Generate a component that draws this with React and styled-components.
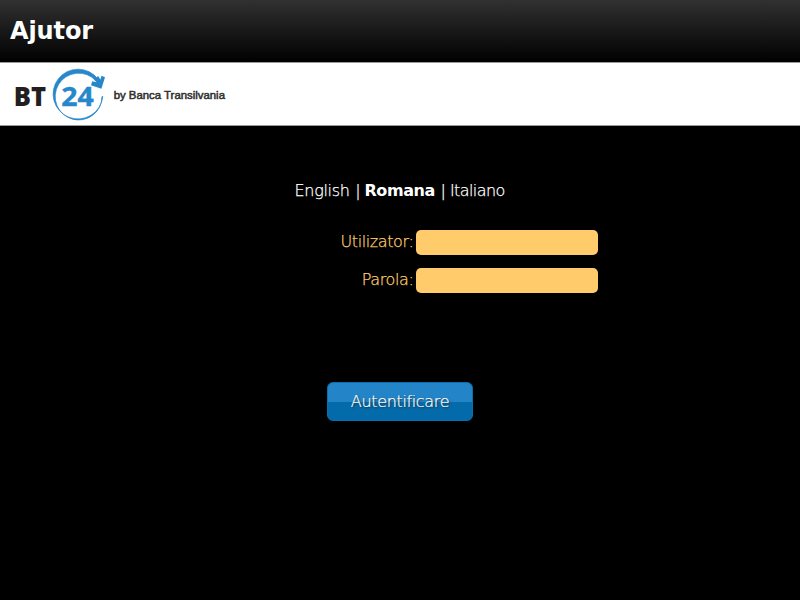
import React from 'react';
import styled, { createGlobalStyle } from 'styled-components';

const GlobalStyle = createGlobalStyle`
  * { box-sizing: border-box; }
  body {
    margin: 0;
    background: #000;
    font-family: "DejaVu Sans", sans-serif;
  }
`;

const Page = styled.div`
  height: 600px;
  overflow: hidden;
  background: #000;
  display: flex;
  flex-direction: column;
  will-change: opacity;
`;

const Header = styled.header`
  height: 62px;
  flex: none;
  display: flex;
  align-items: center;
  padding: 0 10px;
  color: #fff;
  background: linear-gradient(#313131, #000);
`;

const Title = styled.h1`
  margin: 0;
  font-size: 24px;
  line-height: 28px;
  font-weight: bold;
  letter-spacing: -0.1px;
`;

const Brand = styled.div`
  height: 64px;
  flex: none;
  background: #fff;
  border-top: 1px solid #999;
  border-bottom: 1px solid #999;
`;

const Logo = styled.svg`
  display: block;
`;

const Languages = styled.nav`
  display: grid;
  grid-template-columns: 56px 14px 71px 14.5px 56px;
  margin: 55px 0 0 294.5px;
  line-height: 20px;
  font-size: 16px;
  color: #fff;
  white-space: nowrap;
`;

const Language = styled.span`
  font-weight: ${(p) => (p.$active ? 700 : 200)};
  letter-spacing: ${(p) => p.$spacing}px;
  -webkit-text-stroke: ${(p) => (p.$active ? 0 : 0.25)}px #fff;
`;

const Divider = styled.span`
  justify-self: center;
  padding-left: 0.8px;
  font-weight: 200;
  -webkit-text-stroke: 0.25px #fff;
`;

const Form = styled.form`
  display: grid;
  grid-template-columns: 413.4px 182px;
  column-gap: 2.6px;
  row-gap: 13px;
  margin-top: 29px;
`;

const Label = styled.label`
  text-align: right;
  font-size: 16px;
  line-height: 23px;
  font-weight: 200;
  letter-spacing: -0.4px;
  color: #ffcb6b;
  -webkit-text-stroke: 0.25px #ffcb6b;
`;

const Input = styled.input`
  width: 182px;
  height: 25px;
  border: 0;
  border-radius: 5px;
  background: #ffcb6b;
  outline: none;
`;

const Submit = styled.button`
  align-self: center;
  width: 146px;
  height: 39px;
  margin-top: 89px;
  padding: 0;
  border: 1px solid #0a6fb1;
  border-radius: 6px;
  background: linear-gradient(#2385c7 0, #2385c7 50%, #046bab 50%, #046bab 100%);
  color: #fff;
  font: 200 16px/20px "DejaVu Sans", sans-serif;
  letter-spacing: -0.35px;
  -webkit-text-stroke: 0.2px #fff;
  text-shadow: 1px 1px 2px #222;
`;

function BankLogo() {
  return (
    <Logo width="240" height="62" viewBox="0 63 240 62">
      <g fontFamily="Open Sans">
        <text x="13.7" y="106" fontSize="27" fontWeight="800" fill="#231f20" textLength="32.3" lengthAdjust="spacingAndGlyphs">BT</text>
        <text x="61.3" y="106" fontSize="27.5" fontWeight="700" stroke="#2687ca" strokeWidth=".4" fill="#2687ca" textLength="32.5" lengthAdjust="spacingAndGlyphs">24</text>
      </g>
      <path d="M98 79.2A24.9 24.9 0 1 0 102.8 96.5L102 96.5A23.4 23.4 0 1 1 95.6 80.5Z" fill="#2687ca" stroke="#2687ca" strokeWidth=".7" />
      <path d="M91 85.3L92.2 81.2L96.5 82.3L94 79.5L98 76L100.4 79.5L101.5 75.7L105 77.3L101.4 88.8Z" fill="#2687ca" />
      <text x="113.7" y="99" fontFamily="Liberation Sans" fontSize="10.5" fill="#303030" stroke="#303030" strokeWidth=".5" textLength="111.3" lengthAdjust="spacingAndGlyphs">by Banca Transilvania</text>
    </Logo>
  );
}

export default function App() {
  return (
    <Page>
      <GlobalStyle />
      <Header><Title>Ajutor</Title></Header>
      <Brand><BankLogo /></Brand>
      <Languages>
        <Language $spacing={-0.3}>English</Language>
        <Divider>|</Divider>
        <Language $active $spacing={-0.45}>Romana</Language>
        <Divider>|</Divider>
        <Language $spacing={-0.6}>Italiano</Language>
      </Languages>
      <Form>
        <Label htmlFor="user">Utilizator:</Label>
        <Input id="user" type="text" />
        <Label htmlFor="password">Parola:</Label>
        <Input id="password" type="password" />
      </Form>
      <Submit type="button">Autentificare</Submit>
    </Page>
  );
}
